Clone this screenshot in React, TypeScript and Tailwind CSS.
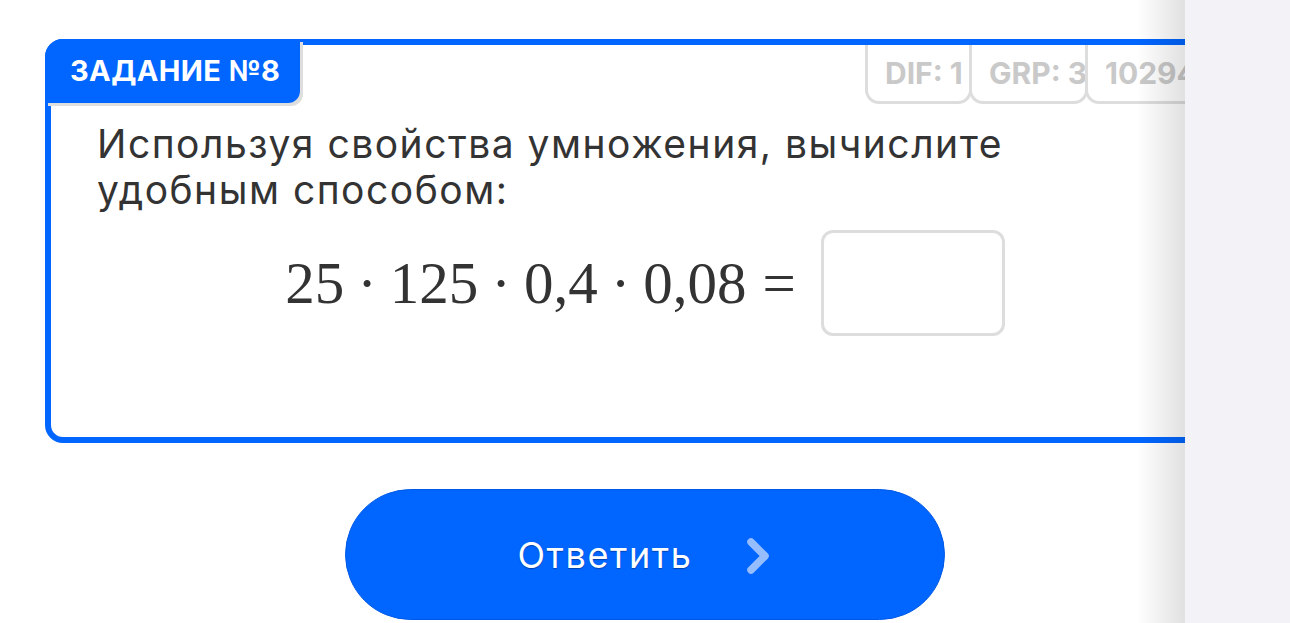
const tags = [
  { label: 'DIF: 1', w: 'w-[107px]' },
  { label: 'GRP: 3', w: 'w-[119px]' },
  { label: '102947', w: 'w-[154px]' },
];

function Tag({ label, w }: { label: string; w: string }) {
  return (
    <div
      className={`${w} -ml-[3px] h-[59px] shrink-0 overflow-hidden whitespace-nowrap rounded-b-[14px] border-[3px] border-t-0 border-[#dddddd] bg-white pl-[17px] pt-[10px] text-[30px] font-bold leading-[36px] text-[#c9c9c9]`}
    >
      {label}
    </div>
  );
}

function Dot() {
  return <span className="mx-[13px] inline-block">·</span>;
}

export default function App() {
  return (
    <div
      className="relative h-[623px] w-[1290px] overflow-hidden bg-white"
      style={{ fontFamily: 'Inter, "Noto Sans", sans-serif' }}
    >
      <div className="px-[45px] pt-[39px]">
        {/* task card */}
        <div className="h-[404px] rounded-[18px] border-[6px] border-[#0066ff] bg-white">
          <div className="flex items-start">
            <div className="-ml-[6px] -mt-[6px] flex h-[64px] items-center rounded-tl-[18px] rounded-br-[12px] bg-[#0066ff] pl-[25px] pr-[20px] text-[29px] font-bold tracking-[0.4px] text-white shadow-[3px_3px_0_#dedede]">
              ЗАДАНИЕ №8
            </div>
            <div className="ml-auto flex">
              {tags.map((t) => (
                <Tag key={t.label} label={t.label} w={t.w} />
              ))}
            </div>
          </div>

          <p className="mt-[17px] pl-[46px] pr-[40px] text-[39px] leading-[46px] tracking-[1.5px] text-[#333333]">
            Используя свойства умножения, вычислите
            <br />
            удобным способом:
          </p>

          <div className="mt-[17px] flex items-center justify-center">
            <span
              className="text-[59px] leading-none text-[#333333]"
              style={{ fontFamily: '"Liberation Serif", serif' }}
            >
              25<Dot />125<Dot />0,4<Dot />0,08<span className="ml-[16px]">=</span>
            </span>
            <div className="ml-[25px] h-[106px] w-[184px] rounded-[12px] border-[3px] border-[#dddddd] bg-white" />
          </div>
        </div>

        {/* answer button */}
        <div className="mt-[46px] flex justify-center">
          <button className="flex h-[131px] w-[600px] items-center justify-center gap-[50px] rounded-full border border-[#0058e6] bg-[#0066ff] text-[36px] tracking-[1.6px] text-white">
            <span className="[text-shadow:0_1px_1px_rgba(0,40,120,0.6)]">Ответить</span>
            <svg width="30" height="38" viewBox="0 0 30 38" className="mt-[2px]">
              <path
                d="M8 5 L22 19 L8 33"
                fill="none"
                stroke="rgba(200,220,255,0.75)"
                strokeWidth="7.5"
                strokeLinecap="round"
                strokeLinejoin="round"
              />
            </svg>
          </button>
        </div>
      </div>

      {/* side panel over the page */}
      <div className="absolute right-0 top-0 h-full w-[105px] bg-[#f2f2f7]">
        <div className="absolute -left-[48px] top-0 h-full w-[48px] bg-gradient-to-r from-transparent to-black/[0.12]" />
      </div>
    </div>
  );
}
